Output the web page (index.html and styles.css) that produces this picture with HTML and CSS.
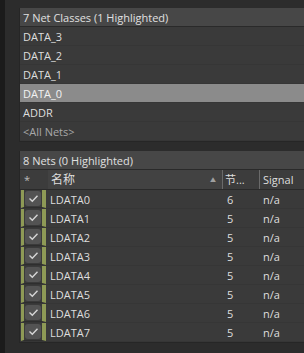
FILE: index.html
```html
<!DOCTYPE html>
<html>
<head>
    <meta charset="utf-8">
    <title>Nets</title>
    <link rel="stylesheet" href="styles.css">
</head>
<body>
    <div class="frame">
        <div class="edge"></div>
        <div class="main">
            <div class="panel classes">
                <div class="panel-title">7 Net Classes (1 Highlighted)</div>
                <div class="row">DATA_3</div>
                <div class="row">DATA_2</div>
                <div class="row">DATA_1</div>
                <div class="row selected">DATA_0</div>
                <div class="row">ADDR</div>
                <div class="row muted">&lt;All Nets&gt;</div>
            </div>

            <div class="panel nets">
                <div class="panel-title">8 Nets (0 Highlighted)</div>
                <div class="net-row head">
                    <div class="c-check star">*</div>
                    <div class="c-name sorted">名称 <span class="arrow">▲</span></div>
                    <div class="c-nodes">节...</div>
                    <div class="c-signal">Signal</div>
                </div>
                <div id="netRows"></div>
            </div>
        </div>
    </div>

    <script>
        const nets = [
            ['LDATA0', 6], ['LDATA1', 5], ['LDATA2', 5], ['LDATA3', 5],
            ['LDATA4', 5], ['LDATA5', 5], ['LDATA6', 5], ['LDATA7', 5]
        ];
        const check = '<svg width="11" height="9" viewBox="0 0 11 9"><path d="M1.5 4.5 L4.3 7.2 L9.5 1.8" fill="none" stroke="#d6d6d6" stroke-width="1.4"/></svg>';
        const rows = document.getElementById('netRows');
        nets.forEach(([name, nodes]) => {
            const row = document.createElement('div');
            row.className = 'net-row';
            row.innerHTML =
                '<div class="c-check"><span class="box">' + check + '</span></div>' +
                '<div class="c-name">' + name + '</div>' +
                '<div class="c-nodes">' + nodes + '</div>' +
                '<div class="c-signal">n/a</div>';
            rows.appendChild(row);
        });
    </script>
</body>
</html>
```

FILE: styles.css
```css
* {
    margin: 0;
    padding: 0;
    box-sizing: border-box;
}

body {
    background-color: #2c2c2c;
    font-family: "Open Sans", "Noto Sans CJK SC", sans-serif;
    font-size: 11px;
    color: #dedede;
    width: 304px;
    height: 353px;
    overflow: hidden;
}

.frame {
    display: flex;
    height: 100%;
}

.edge {
    width: 5px;
    background-color: #1b1b1b;
}

.main {
    flex: 1;
    padding: 8px 0 0 14px;
    display: flex;
    flex-direction: column;
    gap: 9px;
}

.panel {
    background-color: #3a3a3a;
    border-left: 1px solid #262626;
    border-bottom: 1px solid #262626;
}

.panel-title {
    height: 19px;
    line-height: 19px;
    padding-left: 3px;
    background-color: #474747;
    color: #e0e0e0;
    border-bottom: 1px solid #2a2a2a;
}

.row {
    height: 19px;
    line-height: 19px;
    padding-left: 3px;
    border-bottom: 1px solid #363636;
}

.row.selected {
    background-color: #8b8b8b;
    color: #f2f2f2;
}

.row.muted {
    color: #a8a8a8;
}

.net-row {
    display: flex;
    height: 19px;
    line-height: 19px;
    border-bottom: 1px solid #363636;
}

.net-row.head {
    height: 20px;
    line-height: 20px;
    background-color: #3c3c3c;
    border-bottom: 1px solid #2a2a2a;
}

.c-check {
    width: 27px;
    display: flex;
    align-items: center;
    justify-content: center;
}

.net-row:not(.head) .c-check {
    margin-left: 1px;
    width: 25px;
    flex: none;
    border-left: 3px solid #8e9a56;
    border-right: 4px solid #8e9a56;
    border-bottom: 1px solid #2e2e2e;
}

.star {
    color: #bdbdbd;
    justify-content: flex-start;
    padding-left: 4px;
}

.box {
    width: 16px;
    height: 15px;
    border-radius: 3px;
    background-color: #535353;
    display: flex;
    align-items: center;
    justify-content: center;
}

.c-name {
    flex: 1;
    padding-left: 4px;
}

.sorted {
    background-color: #424242;
    margin-left: 1px;
    font-size: 12px;
    position: relative;
    padding-left: 3px;
}

.arrow {
    position: absolute;
    right: 6px;
    top: 0;
    font-size: 6px;
    color: #a0a0a0;
}

.c-nodes {
    width: 37px;
    padding-left: 5px;
}

.head .c-nodes {
    border-left: 1px solid #6a6a6a;
    padding-left: 2px;
}

.c-signal {
    width: 45px;
    padding-left: 4px;
}

.head .c-signal {
    border-left: 1px solid #6a6a6a;
    padding-left: 3px;
}
```
